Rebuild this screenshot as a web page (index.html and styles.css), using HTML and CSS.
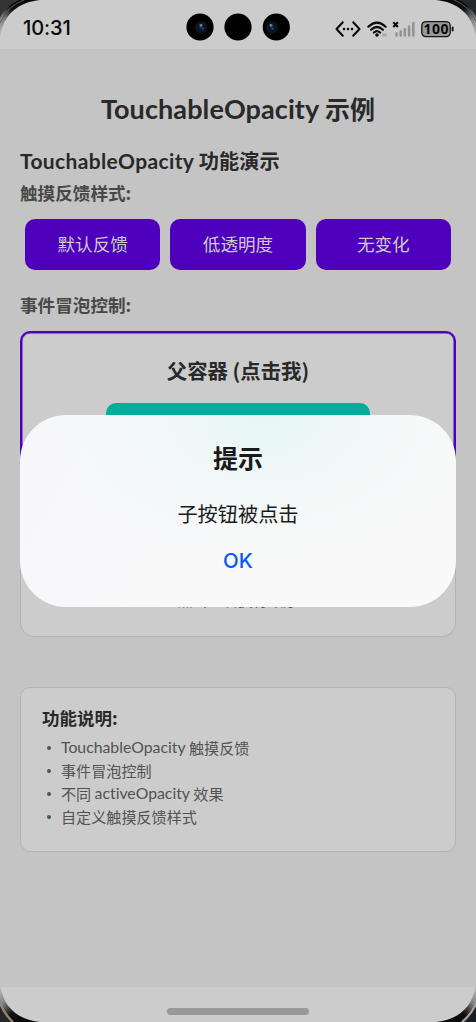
FILE: index.html
```html
<!DOCTYPE html>
<html lang="zh-CN">
<head>
<meta charset="utf-8">
<meta name="viewport" content="width=device-width">
<title>TouchableOpacity 示例</title>
<link rel="stylesheet" href="styles.css">
</head>
<body>
<div class="screen">
  <header class="status">
    <span class="clock">10:31</span>
    <div class="lenses">
      <svg width="104" height="28" viewBox="0 0 104 28">
        <defs>
          <radialGradient id="lens"><stop offset="0" stop-color="#17365c"/><stop offset=".35" stop-color="#0b1320"/><stop offset=".6" stop-color="#15161a"/><stop offset="1" stop-color="#000"/></radialGradient>
        </defs>
        <circle cx="14" cy="14" r="13.6" fill="#000"/><circle cx="15" cy="14.5" r="7.5" fill="url(#lens)"/><circle cx="15" cy="12.3" r="1.4" fill="#4b87c4"/><circle cx="17" cy="15.5" r="1" fill="#204f8e"/>
        <circle cx="52" cy="14" r="13.6" fill="#020202"/>
        <circle cx="90.3" cy="14" r="13.6" fill="#000"/><circle cx="86" cy="14.5" r="7.5" fill="url(#lens)"/><circle cx="85" cy="12.3" r="1.4" fill="#4b87c4"/><circle cx="86.5" cy="16" r="1" fill="#204f8e"/>
      </svg>
    </div>
    <div class="indicators">
      <svg width="26" height="18" viewBox="0 0 26 18" fill="none" stroke="#080808" stroke-width="2" stroke-linecap="round" stroke-linejoin="round"><path d="M7.8 2.3 1.5 9l6.3 6.7M18.2 2.3 24.5 9l-6.3 6.7"/><path d="M9 9h.01M13 9h.01M17 9h.01" stroke-width="2.5"/></svg>
      <svg class="wifi" width="21" height="18" viewBox="0 0 21 18" fill="none" stroke="#080808" stroke-width="2.2" stroke-linecap="round"><path d="M1.4 6.7Q10 -1.3 18.6 6.7M4.1 9.7Q10 4.3 15.9 9.7M6.9 12.5Q10 9.8 13.1 12.5"/><circle cx="10" cy="15" r="1.1" fill="#080808" stroke-width="1.4"/><path d="M16 15h2.5" stroke="#aaa" stroke-width="3"/></svg>
      <svg class="signal" width="23" height="18" viewBox="0 0 23 18" fill="none"><path d="M1.3 2.3l4.6 4.8M5.9 2.3 1.3 7.1" stroke="#080808" stroke-width="2.1"/><path d="M4.5 13.5v2M8.7 11.5v4M12.9 9.2v6.3M17.1 6.5v9M21.3 3v12.5" stroke="#929292" stroke-width="2.5" stroke-linecap="round"/></svg>
      <svg class="battery" width="33" height="18" viewBox="0 0 33 18"><rect x=".8" y="1.6" width="28.4" height="15" rx="4" fill="#979797" stroke="#151515" stroke-width="1.3"/><path d="M31.6 7.5v3" stroke="#151515" stroke-width="1.9" stroke-linecap="round"/><text x="15" y="14" text-anchor="middle" textLength="25" class="battery-text">100</text></svg>
    </div>
  </header>

  <main class="page">
    <h1 class="title"><span class="latin title-latin">TouchableOpacity</span> 示例</h1>
    <h2 class="heading"><span class="latin heading-latin">TouchableOpacity</span> 功能演示</h2>
    <h3 class="label">触摸反馈样式:</h3>
    <div class="buttons">
      <button class="button">默认反馈</button>
      <button class="button">低透明度</button>
      <button class="button">无变化</button>
    </div>
    <h3 class="label label-events">事件冒泡控制:</h3>
    <section class="parent">
      <h2 class="parent-title">父容器 (点击我)</h2>
      <div class="child"></div>
    </section>
    <section class="log"><p class="log-text">点击查看执行顺序</p></section>
    <section class="info">
      <h3 class="info-title">功能说明:</h3>
      <ul class="info-list">
        <li class="info-item"><span class="latin info-latin">TouchableOpacity</span> 触摸反馈</li>
        <li class="info-item">事件冒泡控制</li>
        <li class="info-item">不同 <span class="latin info-latin">activeOpacity</span> 效果</li>
        <li class="info-item">自定义触摸反馈样式</li>
      </ul>
    </section>
  </main>
  <footer class="navigation"><div class="home-bar"></div></footer>

  <div class="dialog" role="dialog">
    <h2 class="dialog-title">提示</h2>
    <p class="dialog-text">子按钮被点击</p>
    <button class="dialog-ok">OK</button>
  </div>

  <svg class="frame" width="476" height="1022" viewBox="0 0 476 1022">
    <defs>
      <linearGradient id="edge" gradientUnits="userSpaceOnUse" x1="0" y1="36" x2="40" y2="0"><stop offset="0" stop-color="#bbb"/><stop offset=".25" stop-color="#858585"/><stop offset=".5" stop-color="#111"/><stop offset="1" stop-color="#000"/></linearGradient>
      <g id="corner"><path d="M0 0H40C20 2 3 13 0 38Z" fill="url(#edge)"/></g>
    </defs>
    <use href="#corner"/><path d="M0 0H19C10 4 3 11 0 18Z" fill="#323436"/><path d="M24 0Q7 6 0 23" fill="none" stroke="#555" stroke-width="1"/>
    <g transform="translate(476 0) scale(-1 1)"><use href="#corner"/><path d="M0 0H17C9 4 3 10 0 17Z" fill="#24282d"/><path d="M22 0Q7 6 0 21" fill="none" stroke="#555" stroke-width="1"/></g>
    <g transform="translate(0 1022) scale(1 -1)"><use href="#corner"/><path d="M0 0H14Q5 8 0 20Z" fill="#25272b"/><path d="M13 0Q4 8 -1 21" fill="none" stroke="#948777" stroke-width="2.3"/></g>
    <g transform="translate(476 1022) scale(-1 -1)"><use href="#corner"/><path d="M0 0H14Q5 8 0 18Z" fill="#171d25"/><path d="M14 0Q5 7 -1 20" fill="none" stroke="#aaa08d" stroke-width="2.3"/></g>
  </svg>
</div>
</body>
</html>
```
FILE: styles.css
```css
* { box-sizing: border-box; margin: 0; padding: 0; }
body { background: #c4c4c4; font-family: "Noto Sans CJK SC", sans-serif; }
button { border: 0; font: inherit; }
.screen { position: relative; width: 476px; height: 1022px; display: flex; flex-direction: column; overflow: hidden; background: #c4c4c4; color: #292929; }
.status { height: 49px; flex: none; background: #ccc; padding: 0 22px 0 23px; display: grid; grid-template-columns: 163px 104px 1fr; align-items: center; }
.clock { font: 500 20px/24px Inter, sans-serif; letter-spacing: -.1px; color: #080808; padding-top: 7px; }
.lenses { height: 28px; margin-top: 5px; }
.indicators { display: flex; align-items: center; justify-content: flex-end; margin-top: 8px; }
.wifi { margin-left: 6px; }
.signal { margin-left: 4px; }
.battery { margin-left: 6px; }
.battery-text { font: 700 14px "Noto Sans", sans-serif; fill: #080808; }
.latin { font-family: Lato, sans-serif; font-variant-ligatures: none; }
.page { flex: 1; padding: 40px 20px 0; display: flex; flex-direction: column; }
.title { font-size: 25px; line-height: 38px; font-weight: 700; text-align: center; white-space: nowrap; }
.title-latin { font-size: 27px; letter-spacing: .1px; }
.heading { margin-top: 18px; font-size: 20.2px; line-height: 30px; font-weight: 700; white-space: nowrap; }
.heading-latin { font-size: 21px; letter-spacing: .35px; }
.label { margin-top: 5px; font-size: 17.6px; line-height: 24px; font-weight: 700; color: #484848; }
.buttons { margin: 14px 5px 0; display: grid; grid-template-columns: repeat(3, 1fr); gap: 10px; }
.button { height: 51px; border-radius: 10px; background: #4e00bc; color: #ccc; font-size: 17.6px; line-height: 26px; padding-bottom: 2px; }
.label-events { margin-top: 23px; }
.parent { margin-top: 14px; height: 180px; flex: none; border: 2px solid #4e00bc; border-radius: 10px; background: #ccc; padding-top: 22px; display: flex; flex-direction: column; align-items: center; box-shadow: inset 0 0 0 .5px #4e00bc; }
.parent-title { font-size: 20.4px; line-height: 30px; font-weight: 700; }
.child { margin-top: 18px; width: 264px; height: 60px; border-radius: 10px; background: #02ad9d; }
.log { margin-top: 15px; height: 111px; flex: none; border: 1px solid #b2b2b2; border-radius: 14px; background: #ccc; display: flex; justify-content: center; padding-top: 61px; }
.log-text { font-size: 15.1px; line-height: 22px; color: #555; }
.info { margin-top: 50px; height: 165px; border: 1px solid #b2b2b2; border-radius: 10px; background: #ccc; padding: 17px 21px; }
.info-title { font-size: 17.5px; line-height: 26px; font-weight: 700; }
.info-list { list-style: none; margin-top: 4px; }
.info-item { display: flex; align-items: center; white-space: pre; font-size: 15.1px; line-height: 22.7px; color: #525252; }
.info-item::before { content: ""; width: 4px; height: 4px; border-radius: 50%; background: #525252; margin: 2px 10px 0 5px; }
.info-latin { font-size: 15.8px; padding-top: 1px; }
.navigation { height: 35px; flex: none; background: #ccc; display: flex; justify-content: center; align-items: flex-end; padding-bottom: 7px; }
.home-bar { width: 142px; height: 7px; border-radius: 4px; background: #999; }
.dialog { position: absolute; left: 20px; top: 415px; width: 436px; height: 192px; border-radius: 46px; display: flex; flex-direction: column; align-items: center; padding-top: 24px; background: radial-gradient(ellipse 220px 150px at 56% 0, #e7f7f6, rgba(239,248,247,.75) 50%, rgba(248,249,249,0)), linear-gradient(120deg, #f7f7fb, #f9f9f9 60%); color: #191a1a; }
.dialog-title { font-size: 25px; line-height: 36px; font-weight: 700; }
.dialog-text { margin-top: 24px; font-size: 20.2px; line-height: 30px; }
.dialog-ok { margin-top: 18px; background: none; color: #0a59f7; font: 500 20.5px/28px Inter, sans-serif; }
.frame { position: absolute; inset: 0; pointer-events: none; }
```
